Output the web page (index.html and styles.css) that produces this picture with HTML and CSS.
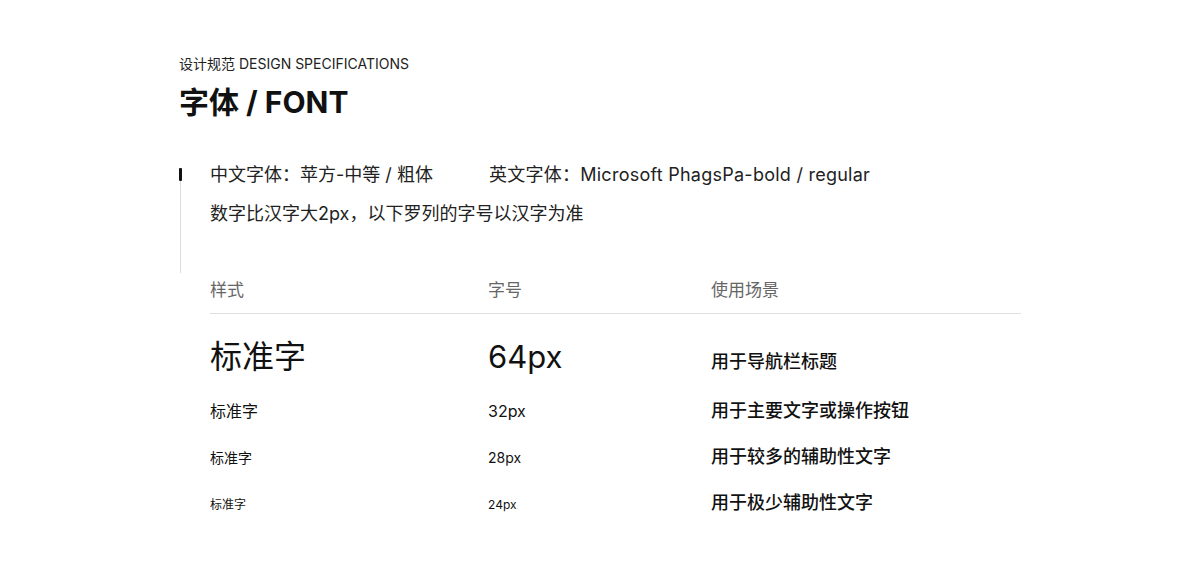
FILE: index.html
```html
<!DOCTYPE html>
<html lang="zh-CN">
<head>
<meta charset="utf-8">
<title>字体 / FONT</title>
<link rel="stylesheet" href="styles.css">
</head>
<body>
<div class="page">
  <div class="sub">设计规范 DESIGN SPECIFICATIONS</div>
  <h1 class="title">字体 / FONT</h1>

  <div class="intro">
    <div class="rail"><span class="rail-mark"></span><span class="rail-line"></span></div>
    <div class="intro-body">
      <div class="intro-line"><span class="col-a">中文字体：苹方-中等 / 粗体</span><span class="en">英文字体：Microsoft PhagsPa-bold / regular</span></div>
      <div class="intro-line">数字比汉字大2px，以下罗列的字号以汉字为准</div>
    </div>
  </div>

  <div class="spec">
    <div class="spec-head">
      <span>样式</span><span>字号</span><span>使用场景</span>
    </div>
    <div class="spec-body">
      <div class="spec-row">
        <span class="s64">标准字</span><span class="n64">64px</span><span class="use">用于导航栏标题</span>
      </div>
      <div class="spec-row">
        <span class="s32">标准字</span><span class="n32">32px</span><span class="use">用于主要文字或操作按钮</span>
      </div>
      <div class="spec-row">
        <span class="s28">标准字</span><span class="n28">28px</span><span class="use">用于较多的辅助性文字</span>
      </div>
      <div class="spec-row">
        <span class="s24">标准字</span><span class="n24">24px</span><span class="use">用于极少辅助性文字</span>
      </div>
    </div>
  </div>
</div>
</body>
</html>
```

FILE: styles.css
```css
* { box-sizing: border-box; }
html, body { margin: 0; padding: 0; background: #ffffff; }
body {
  font-family: Inter, "Noto Sans CJK SC", sans-serif;
  color: #1a1a1a;
}
.page {
  width: 1200px;
  height: 570px;
  padding: 56px 0 0 179px;
  overflow: hidden;
}
.sub {
  font-size: 14px;
  line-height: 16px;
  color: #222;
}
.title {
  margin: 12px 0 0 0;
  font-size: 30px;
  line-height: 36px;
  font-weight: 700;
  color: #111;
}
.intro {
  margin-top: 42px;
  display: flex;
}
.rail {
  width: 3px;
  height: 105px;
  margin-top: 6px;
  display: flex;
  flex-direction: column;
  align-items: center;
}
.rail-mark {
  width: 3px;
  height: 13px;
  background: #111;
  border-radius: 1px;
}
.rail-line {
  width: 1px;
  flex: 1;
  background: #dcdcdc;
}
.intro-body {
  margin-left: 28px;
  display: flex;
  flex-direction: column;
  gap: 13px;
}
.intro-line {
  font-size: 18px;
  line-height: 26px;
  color: #222;
  display: flex;
  white-space: nowrap;
}
.col-a { width: 279px; }
.en { letter-spacing: 0.25px; }

.spec {
  margin: 5px 0 0 31px;
  width: 811px;
}
.spec-head, .spec-row {
  display: grid;
  grid-template-columns: 278px 223px 1fr;
}
.spec-head {
  font-size: 17px;
  line-height: 24px;
  color: #666;
  padding-bottom: 11px;
  border-bottom: 1px solid #e0e0e0;
}
.spec-body {
  padding-top: 23px;
  display: flex;
  flex-direction: column;
  gap: 22px;
}
.spec-row {
  align-items: baseline;
  color: #111;
}
.s64 { font-size: 32px; line-height: 40px; }
.n64 { font-size: 31px; line-height: 40px; }
.s32, .n32 { font-size: 16px; line-height: 24px; }
.s28, .n28 { font-size: 14px; line-height: 22px; }
.s24, .n24 { font-size: 12px; line-height: 20px; }
.use {
  font-size: 18px;
  line-height: 24px;
  font-weight: 500;
}
```
